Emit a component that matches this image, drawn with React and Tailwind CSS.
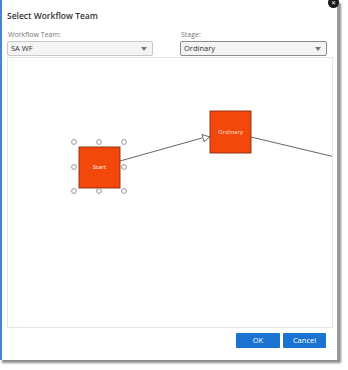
import React from 'react';

const Handle = ({ x, y }) => (
    <circle cx={x} cy={y} r="2.4" fill="white" stroke="#8a8a8a" strokeWidth="0.9" />
);

function Select({ value, dark }) {
    return (
        <div className={`h-[15px] flex items-center justify-between px-[3px] bg-[#f4f4f4] border ${dark ? 'border-[#8c8c8c]' : 'border-[#c8c8c8]'} rounded-[2px]`}>
            <span className="text-[7.5px] text-[#333]">{value}</span>
            <svg width="6" height="4" viewBox="0 0 6 4" className="mr-[2px]">
                <path d="M0 0 L6 0 L3 4 Z" fill="#777" />
            </svg>
        </div>
    );
}

export default function App() {
    const handles = [];
    [73, 98, 123].forEach(x => [141, 166, 190].forEach(y => {
        if (!(x === 98 && y === 166)) handles.push([x, y]);
    }));

    return (
        <div className="w-[348px] h-[370px] bg-white relative overflow-hidden" style={{ fontFamily: '"Open Sans", "Noto Sans", sans-serif' }}>
            <div className="flex">
                {/* dialog */}
                <div className="w-[339px] h-[360px] flex shadow-[2px_3px_2px_rgba(0,0,0,0.45)]">
                    <div className="w-[2px] bg-[#3f86d6]" />
                    <div className="flex-1 bg-white border-r-[2px] border-[#9a9a9a] flex flex-col pl-[5px] pr-[4px]">
                        <h1 className="text-[8.5px] font-semibold text-[#333] mt-[10px] leading-[11px]">Select Workflow Team</h1>
                        <div className="flex gap-[27px] mt-[9px] pr-[6px]">
                            <div className="w-[146px] flex flex-col">
                                <span className="text-[7px] text-[#777] leading-[9px] mb-[2px] pl-px">Workflow Team:</span>
                                <Select value="SA WF" />
                            </div>
                            <div className="flex-1 flex flex-col">
                                <span className="text-[7px] text-[#777] leading-[9px] mb-[2px] pl-px">Stage:</span>
                                <Select value="Ordinary" dark />
                            </div>
                        </div>
                        {/* canvas */}
                        <div className="mt-[1px] h-[271px] border border-[#e6e6e6] relative overflow-hidden">
                            <svg width="326" height="271" className="absolute left-0 top-0">
                                <g transform="translate(-7,-57)">
                                    <line x1="119" y1="160" x2="201" y2="137" stroke="#555" strokeWidth="0.9" />
                                    <path d="M201 133.5 L209 136 L203 140.5 Z" fill="white" stroke="#555" strokeWidth="0.9" />
                                    <line x1="250" y1="136" x2="334" y2="156" stroke="#555" strokeWidth="0.9" />
                                    <rect x="78" y="146" width="41" height="41" fill="#f2480c" stroke="#8a2c10" strokeWidth="0.9" />
                                    <rect x="209" y="110" width="41" height="42" fill="#f2480c" stroke="#8a2c10" strokeWidth="0.9" />
                                    {handles.map(([x, y]) => <Handle key={`${x}-${y}`} x={x} y={y} />)}
                                </g>
                            </svg>
                            <div className="absolute left-[71px] top-[89px] w-[41px] h-[41px] flex items-center justify-center text-[6px] text-white">Start</div>
                            <div className="absolute left-[202px] top-[53px] w-[41px] h-[42px] flex items-center justify-center text-[6px] text-[#ffe0d0]">Ordinary</div>
                        </div>
                        <div className="flex justify-end gap-[3px] mt-[5px] pr-[7px]">
                            <button className="w-[44px] h-[15px] bg-[#1a73d1] text-white text-[7.5px] rounded-[1px]">OK</button>
                            <button className="w-[43px] h-[15px] bg-[#1a73d1] text-white text-[7.5px] rounded-[1px]">Cancel</button>
                        </div>
                    </div>
                </div>
            </div>
            {/* close button */}
            <div className="absolute left-[328px] top-[-3px] w-[11px] h-[11px] rounded-full bg-[#1a1a1a] flex items-center justify-center">
                <span className="text-white text-[6px] leading-none">✕</span>
            </div>
        </div>
    );
}
